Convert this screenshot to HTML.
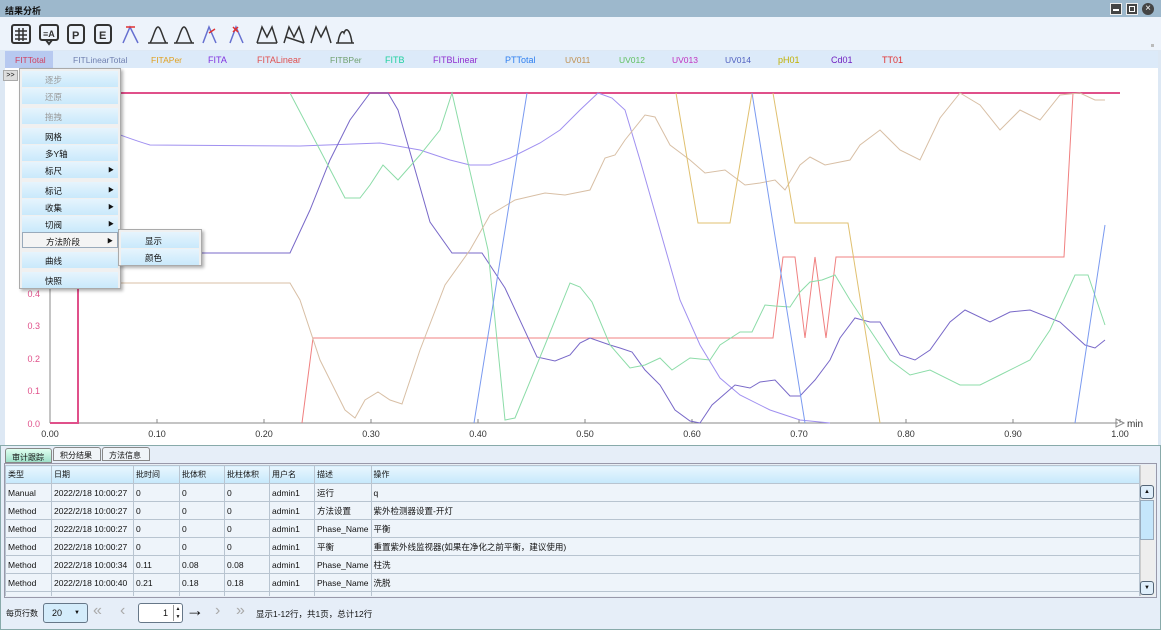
<!DOCTYPE html>
<html><head><meta charset="utf-8">
<style>
*{box-sizing:border-box;margin:0;padding:0}
body{width:1161px;height:630px;overflow:hidden;font-family:"Liberation Sans","Noto Sans CJK SC",sans-serif;font-size:9px;background:#dde8f4;position:relative;color:#111}
.abs{position:absolute}
.title{left:0;top:0;width:1161px;height:17px;background:#9db8cc;font-weight:bold;font-size:9px;padding:4px 5px}
.tb{left:0;top:17px;width:1161px;height:33px;background:#edf3fb}
.legend{left:5px;top:51px;width:1153px;height:17px;background:#dceaf9}
.legend span{position:absolute;top:4px;font-size:8.5px}
.chart{left:5px;top:68px;width:1153px;height:377px;background:#fff}
.menu{left:19px;top:68px;width:102px;height:221px;background:#f0f0f0;border:1px solid #aaa;box-shadow:2px 2px 3px rgba(0,0,0,.3)}
.mi{position:absolute;left:2px;width:96px;height:16px;background:linear-gradient(#e6f4fd,#c9e9fb);font-size:8.5px;padding:3px 0 0 23px}
.mi.d{color:#999}
.mi .ar{position:absolute;right:4px;top:3px;font-size:6px}
.sub{left:118px;top:229px;width:84px;height:37px;background:#f0f0f0;border:1px solid #aaa;box-shadow:2px 2px 3px rgba(0,0,0,.3)}
table{border-collapse:collapse}
td{border:1px solid #b8c4d0;height:18px;padding:0 2px;font-size:8.5px;white-space:nowrap;background:#eef4fa}
tr.h td{background:linear-gradient(#e8f6fe,#c6e8fb);font-size:8px}
</style></head><body>
<div class="abs title">结果分析</div>
<div class="abs" style="left:1110px;top:3px;width:12px;height:12px;background:#444;border:1px solid #eee"><div style="margin:5px 2px;height:2px;background:#fff"></div></div>
<div class="abs" style="left:1126px;top:3px;width:12px;height:12px;background:#444;border:1px solid #eee"><div style="margin:2px;height:6px;border:1.5px solid #fff"></div></div>
<div class="abs" style="left:1142px;top:3px;width:12px;height:12px;background:#444;border-radius:50%;color:#fff;font-size:10px;line-height:11px;text-align:center">×</div>
<div class="abs tb">
<svg width="400" height="33" viewBox="0 0 400 33">
<g fill="none" stroke="#333" stroke-width="2">
<rect x="12" y="8" width="18" height="18" rx="2"/><path d="M15 14h12M15 18h12M15 22h12M19 11v13M23 11v13" stroke-width="1.5"/>
<rect x="40" y="8" width="18" height="15" rx="2"/><path d="M46 23l3 4 3-4"/>
<rect x="68" y="8" width="16" height="18" rx="3"/>
<rect x="95" y="8" width="16" height="18" rx="3"/>
</g>
<text x="43" y="20" font-size="9" font-weight="bold" fill="#333">≡A</text>
<text x="72" y="22" font-size="11" font-weight="bold" fill="#333">P</text>
<text x="99" y="22" font-size="11" font-weight="bold" fill="#333">E</text>
<g fill="none" stroke-width="1.5">
<path d="M123 26l7-16 8 16" stroke="#6670d0"/><path d="M126 10h9" stroke="#e03030"/>
<path d="M150 26c3-4 5-16 8-16s5 12 8 16M148 26h20" stroke="#333"/>
<path d="M176 26c3-4 5-16 8-16s5 12 8 16M174 26h20" stroke="#333"/>
<path d="M203 26l6-16 7 16" stroke="#6670d0"/><path d="M209 16l6-4" stroke="#e03030"/>
<path d="M230 26l6-16 7 16" stroke="#6670d0"/><path d="M233 10l5 5M238 10l-5 5" stroke="#e03030"/>
<path d="M257 26l5-16 5 10 5-10 5 16M257 26h20" stroke="#333"/>
<path d="M284 26l5-16 5 10 5-10 5 16M286 20l18 6" stroke="#333"/>
<path d="M311 26l5-16 5 10 5-10 5 16" stroke="#333"/>
<path d="M338 26c1-8 4-14 6-10 2-6 6-4 8 10M336 26h18" stroke="#333"/>
</g></svg>
</div>
<div class="abs legend">
<div class="abs" style="left:0;top:0;width:48px;height:17px;background:#b7c9f0"></div>
<span style="left:10px;color:#d04060">FITTotal</span>
<span style="left:68px;color:#7080b0">FITLinearTotal</span>
<span style="left:146px;color:#e0a020">FITAPer</span>
<span style="left:203px;color:#8030e0;font-size:9px">FITA</span>
<span style="left:252px;color:#e05050;font-size:9px">FITALinear</span>
<span style="left:325px;color:#70a070">FITBPer</span>
<span style="left:380px;color:#20d0a0;font-size:9px">FITB</span>
<span style="left:428px;color:#9030d0;font-size:9px">FITBLinear</span>
<span style="left:500px;color:#3080f0;font-size:9px">PTTotal</span>
<span style="left:560px;color:#c09050">UV011</span>
<span style="left:614px;color:#60c060">UV012</span>
<span style="left:667px;color:#c030c0">UV013</span>
<span style="left:720px;color:#5060c0">UV014</span>
<span style="left:773px;color:#c0b000;font-size:9px">pH01</span>
<span style="left:826px;color:#7020c0;font-size:9px">Cd01</span>
<span style="left:877px;color:#e03030;font-size:9px">TT01</span>
</div>
<div class="abs" style="left:1151px;top:44px;width:3px;height:3px;background:#bbb"></div>
<div class="abs chart"></div>
<svg class="abs" style="left:0;top:0" width="1161" height="450">
<g fill="none" stroke-width="1">
<path d="M50 423V95M50 423H1118" stroke="#888"/>
<path d="M1116 419l8 4-8 4z" stroke="#888"/>
<g stroke="#888">
<path d="M50 423v-4M157 423v-4M264 423v-4M371 423v-4M478 423v-4M585 423v-4M692 423v-4M799 423v-4M906 423v-4M1013 423v-4M1120 423v-4"/>
</g>
<path d="M50 423H78V93H1120" stroke="#e0508a" stroke-width="2"/>
<path d="M302 423L313 338H773L783 257H795L805 338L815 257L826 338L836 257H1064L1073 93" stroke="#f08080"/>
<path d="M50 118C90 118 100 130 150 145L300 146 380 143 420 150 450 160 470 165 490 165 510 158 540 143 560 130 580 110 598 93 612 98 625 110 640 160 660 230 680 300 700 345 720 378 740 395 770 410 800 420 830 423" stroke="#a090f0"/>
<path d="M50 253H290L310 210 330 160 350 120 370 93 388 93 398 110 430 222 452 253H482L505 288 537 357 555 361 570 355 580 343 590 338 610 345 620 348 632 352 645 370 660 385 675 410 690 421 700 423 712 405 735 385 750 388 760 382 775 380 790 396 800 396 815 380 830 360 840 338 855 318 870 322 880 322 900 355 915 360 930 350 950 322 965 310 990 322 1010 312 1030 310 1060 322 1085 345 1095 348 1105 340" stroke="#7868c8"/>
<path d="M290 93L320 150 345 198 360 198 370 185 383 165 398 180 420 155 440 130 452 93 488 250 505 420 515 418 545 345 570 283 580 287 592 302 610 345 630 368 645 365 660 358 672 370 690 358 710 360 720 345 740 332 752 332 765 305 775 306 790 307 800 292 810 282 822 280 835 275 850 300 870 330 890 360 910 375 930 370 960 385 980 385 1000 375 1030 360 1050 330 1075 275 1088 275 1105 325" stroke="#8cdca8"/>
<path d="M50 283H290L300 300 320 360 345 410 355 418 365 400 378 392 390 400 402 404 420 350 445 285 470 250 490 215 515 200 545 193 565 195 590 190 605 158 615 155 625 140 645 115 655 117 670 145 690 160 705 173 725 170 745 185 760 183 775 180 785 190 800 165 810 157 825 165 835 163 850 160 860 145 880 130 900 150 920 160 940 118 960 93 980 105 1000 130 1020 110 1040 120 1060 95 1080 93 1095 100 1105 100" stroke="#d8bfa5"/>
<path d="M676 93L698 223H730L752 93M773 93L795 223H848L880 423" stroke="#e0c070"/>
<path d="M474 423L527 93M752 93L805 423M1075 423L1105 225" stroke="#7a9af0"/>
</g>
<g font-size="9" fill="#333" text-anchor="middle">
<text x="50" y="437">0.00</text><text x="157" y="437">0.10</text><text x="264" y="437">0.20</text><text x="371" y="437">0.30</text><text x="478" y="437">0.40</text><text x="585" y="437">0.50</text><text x="692" y="437">0.60</text><text x="799" y="437">0.70</text><text x="906" y="437">0.80</text><text x="1013" y="437">0.90</text><text x="1120" y="437">1.00</text>
<text x="1135" y="427" font-size="10">min</text>
</g>
<g font-size="9" fill="#e0508a" text-anchor="end">
<text x="40" y="297">0.4</text><text x="40" y="329">0.3</text><text x="40" y="362">0.2</text><text x="40" y="394">0.1</text><text x="40" y="427">0.0</text>
</g>
</svg>
<div class="abs" style="left:3px;top:70px;width:15px;height:11px;background:#ddd;border:1px solid #aaa;font-size:7px;line-height:9px;text-align:center">&gt;&gt;</div>
<div class="abs menu">
<div class="mi d" style="top:2px">逐步</div>
<div class="mi d" style="top:19px">还原</div>
<div class="mi d" style="top:39px">拖拽</div>
<div class="mi" style="top:59px">网格</div>
<div class="mi" style="top:76px">多Y轴</div>
<div class="mi" style="top:93px">标尺<span class="ar">▶</span></div>
<div class="mi" style="top:113px">标记<span class="ar">▶</span></div>
<div class="mi" style="top:130px">收集<span class="ar">▶</span></div>
<div class="mi" style="top:147px">切阀<span class="ar">▶</span></div>
<div class="mi" style="top:163px;background:#f4f4f4;border:1px solid #9ab">方法阶段<span class="ar">▶</span></div>
<div class="mi" style="top:183px">曲线</div>
<div class="mi" style="top:203px">快照</div>
</div>
<div class="abs sub">
<div class="mi" style="top:2px;width:78px;padding-left:24px">显示</div>
<div class="mi" style="top:19px;width:78px;padding-left:24px">颜色</div>
</div>
<div class="abs" style="left:0;top:445px;width:1161px;height:185px;background:#e6eef8;border:1px solid #8aa"></div>
<div class="abs" style="left:5px;top:448px;width:47px;height:15px;background:linear-gradient(#e0fff0,#9ee0c8);border:1px solid #888;border-radius:3px 3px 0 0;font-size:8px;padding:3px 0 0 6px">审计跟踪</div>
<div class="abs" style="left:53px;top:447px;width:48px;height:14px;background:#f0f4f8;border:1px solid #888;border-radius:3px 3px 0 0;font-size:8px;padding:2px 0 0 6px">积分结果</div>
<div class="abs" style="left:102px;top:447px;width:48px;height:14px;background:#f0f4f8;border:1px solid #888;border-radius:3px 3px 0 0;font-size:8px;padding:2px 0 0 6px">方法信息</div>
<div class="abs" style="left:4px;top:463px;width:1153px;height:135px;border:1px solid #99a;background:#e8eef5"></div>
<div class="abs" style="left:5px;top:465px;width:1135px;height:131px;overflow:hidden">
<table style="width:1135px">
<tr class="h"><td style="width:46px">类型</td><td style="width:82px">日期</td><td style="width:46px">批时间</td><td style="width:45px">批体积</td><td style="width:45px">批柱体积</td><td style="width:45px">用户名</td><td style="width:55px">描述</td><td>操作</td></tr>
<tr><td>Manual</td><td>2022/2/18 10:00:27</td><td>0</td><td>0</td><td>0</td><td>admin1</td><td>运行</td><td>q</td></tr>
<tr><td>Method</td><td>2022/2/18 10:00:27</td><td>0</td><td>0</td><td>0</td><td>admin1</td><td>方法设置</td><td>紫外检测器设置-开灯</td></tr>
<tr><td>Method</td><td>2022/2/18 10:00:27</td><td>0</td><td>0</td><td>0</td><td>admin1</td><td>Phase_Name</td><td>平衡</td></tr>
<tr><td>Method</td><td>2022/2/18 10:00:27</td><td>0</td><td>0</td><td>0</td><td>admin1</td><td>平衡</td><td>重置紫外线监视器(如果在净化之前平衡，建议使用)</td></tr>
<tr><td>Method</td><td>2022/2/18 10:00:34</td><td>0.11</td><td>0.08</td><td>0.08</td><td>admin1</td><td>Phase_Name</td><td>柱洗</td></tr>
<tr><td>Method</td><td>2022/2/18 10:00:40</td><td>0.21</td><td>0.18</td><td>0.18</td><td>admin1</td><td>Phase_Name</td><td>洗脱</td></tr>
<tr><td>&nbsp;</td><td></td><td></td><td></td><td></td><td></td><td></td><td></td></tr>
</table>
</div>
<div class="abs" style="left:1140px;top:465px;width:15px;height:131px;background:#eee;border-left:1px solid #ccc"></div>
<div class="abs" style="left:1140px;top:485px;width:14px;height:14px;background:#dfeefa;border:1px solid #567;border-radius:3px;font-size:6px;text-align:center;line-height:12px">▲</div>
<div class="abs" style="left:1140px;top:500px;width:14px;height:40px;background:#c5e6fb;border:1px solid #9ab"></div>
<div class="abs" style="left:1140px;top:581px;width:14px;height:14px;background:#dfeefa;border:1px solid #567;border-radius:3px;font-size:6px;text-align:center;line-height:12px">▼</div>
<div class="abs" style="left:6px;top:608px;font-size:8px">每页行数</div>
<div class="abs" style="left:43px;top:603px;width:45px;height:20px;background:#d4ecfb;border:1px solid #678;border-radius:3px;font-size:9px;padding:4px 0 0 8px;white-space:nowrap">20<span class="abs" style="left:30px;top:6px;font-size:6px">▼</span></div>
<div class="abs" style="left:93px;top:602px;font-size:16px;color:#aaa">«</div>
<div class="abs" style="left:120px;top:602px;font-size:16px;color:#aaa">‹</div>
<div class="abs" style="left:138px;top:603px;width:45px;height:20px;background:#fff;border:1px solid #678;border-radius:3px;font-size:9px;text-align:right;padding:4px 14px 0 0">1</div>
<div class="abs" style="left:173px;top:605px;width:9px;height:16px;border-left:1px solid #999;font-size:5px;line-height:8px;text-align:center">▲<br>▼</div>
<div class="abs" style="left:186px;top:600px;font-size:18px">→</div>
<div class="abs" style="left:215px;top:602px;font-size:16px;color:#aaa">›</div>
<div class="abs" style="left:236px;top:602px;font-size:16px;color:#aaa">»</div>
<div class="abs" style="left:256px;top:608px;font-size:8.5px">显示1-12行，共1页，总计12行</div>
</body></html>
